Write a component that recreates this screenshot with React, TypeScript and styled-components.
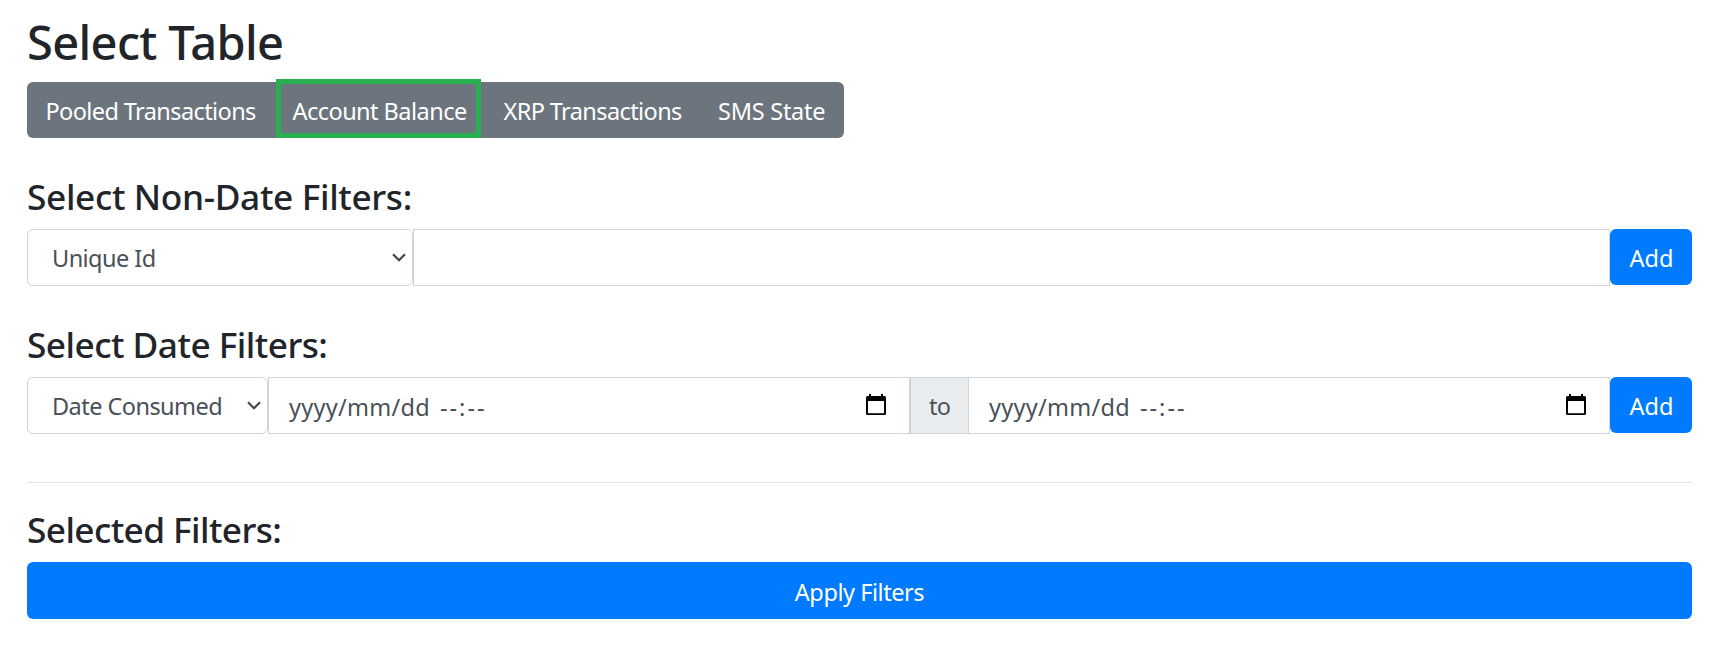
import React from "react";
import styled, { createGlobalStyle } from "styled-components";

const GlobalStyle = createGlobalStyle`
  *, *::before, *::after { box-sizing: border-box; }
  body {
    margin: 0;
    background: #fff;
    color: #212529;
    font-family: "Segoe UI", "Noto Sans", "Open Sans", sans-serif;
    font-size: 23.5px;
    line-height: 36px;
  }
`;

const Page = styled.main`
  padding: 13px 43px 36px 27px;
  white-space: nowrap;
`;

const Title = styled.h1`
  margin: 0 0 11px;
  font-size: 47px;
  font-weight: 500;
  line-height: 58px;
  letter-spacing: -0.65px;
`;

const Heading = styled.h4<{ $spacing: number }>`
  margin: 0 0 11px;
  font-size: 35.25px;
  font-weight: 500;
  line-height: 43px;
  letter-spacing: ${(p) => p.$spacing}px;
`;

const Label = styled.span<{ $spacing?: number }>`
  letter-spacing: ${(p) => p.$spacing ?? 0}px;
`;

const ButtonGroup = styled.div`
  display: inline-flex;
  height: 56px;
  margin-bottom: 37px;
  border-radius: 6px;
  background: #6c757d;
  vertical-align: top;
`;

const TableButton = styled.button<{ $width: number }>`
  position: relative;
  display: flex;
  align-items: center;
  width: ${(p) => p.$width}px;
  padding: 1px 0 0 18.5px;
  border: 0;
  background: transparent;
  color: #fff;
  font: inherit;
`;

const Highlight = styled.span`
  position: absolute;
  top: -3px;
  left: 2px;
  width: 205px;
  height: 59px;
  border: 5px solid #28b050;
`;

const InputRow = styled.div<{ $gap: number }>`
  display: flex;
  align-items: flex-start;
  height: 57px;
  margin-bottom: ${(p) => p.$gap}px;
  color: #495057;
`;

const SelectBox = styled.div<{ $width: number }>`
  display: flex;
  align-items: center;
  justify-content: space-between;
  width: ${(p) => p.$width}px;
  height: 57px;
  padding: 0 6px 0 24px;
  border: 1px solid #ced4da;
  border-radius: 6px;
`;

const Field = styled.div`
  display: flex;
  flex: 1;
  align-items: center;
  height: 57px;
  padding: 3px 23px 0 20px;
  border: 1px solid #ced4da;
`;

const DateText = styled.span`
  display: flex;
  flex: 1;
  gap: 10px;
`;

const Addon = styled.div`
  display: flex;
  align-items: center;
  width: 58px;
  height: 57px;
  padding: 1px 0 0 18px;
  border: 1px solid #ced4da;
  border-right: 0;
  background: #e9ecef;
`;

const PrimaryButton = styled.button<{ $block?: boolean }>`
  display: flex;
  align-items: center;
  justify-content: center;
  width: ${(p) => (p.$block ? "100%" : "82px")};
  height: ${(p) => (p.$block ? 57 : 56)}px;
  padding: ${(p) => (p.$block ? "3px 0 0" : "1px 0 0 1px")};
  border: 0;
  border-radius: 6px;
  background: #007bff;
  color: #fff;
  font: inherit;
`;

const Divider = styled.hr`
  height: 1px;
  margin: 0 0 25px;
  border: 0;
  background: #e3e4e5;
`;

const ChevronSvg = styled.svg`
  display: block;
  margin-top: 0;
`;

const CalendarSvg = styled.svg`
  display: block;
  margin-top: -5px;
`;

const Chevron = () => (
  <ChevronSvg width="14" height="9" viewBox="0 0 14 9" fill="none" stroke="#3f464c" strokeWidth="2.1">
    <path d="M1 1.2 7 7.2 13 1.2" />
  </ChevronSvg>
);

const Calendar = () => (
  <CalendarSvg width="20" height="21" viewBox="0 0 20 21">
    <path
      fill="#000"
      fillRule="evenodd"
      d="M3 0h2v2h10V0h2v2h1.5Q20 2 20 3.5v16q0 1.5-1.5 1.5h-17Q0 21 0 19.500v-16Q0 2 1.500 2H3ZM2 7v12.300h16V7Z"
    />
  </CalendarSvg>
);

const DateField = () => (
  <Field>
    <DateText>
      <Label $spacing={0.27}>yyyy/mm/dd</Label>
      <Label $spacing={2}>--:--</Label>
    </DateText>
    <Calendar />
  </Field>
);

const tables = [
  { name: "Pooled Transactions", width: 247, spacing: -0.6 },
  { name: "Account Balance", width: 211, spacing: -0.54, active: true },
  { name: "XRP Transactions", width: 214.5, spacing: -0.6 },
  { name: "SMS State", width: 144.5, spacing: -0.25 },
];

export default function App() {
  return (
    <>
      <GlobalStyle />
      <Page>
        <Title>Select Table</Title>
        <ButtonGroup>
          {tables.map((t) => (
            <TableButton key={t.name} $width={t.width}>
              <Label $spacing={t.spacing}>{t.name}</Label>
              {t.active && <Highlight />}
            </TableButton>
          ))}
        </ButtonGroup>

        <Heading $spacing={-0.36}>Select Non-Date Filters:</Heading>
        <InputRow $gap={37}>
          <SelectBox $width={386}>
            <Label $spacing={-0.55}>Unique Id</Label>
            <Chevron />
          </SelectBox>
          <Field />
          <PrimaryButton>Add</PrimaryButton>
        </InputRow>

        <Heading $spacing={-0.54}>Select Date Filters:</Heading>
        <InputRow $gap={48}>
          <SelectBox $width={241}>
            <Label $spacing={-0.55}>Date Consumed</Label>
            <Chevron />
          </SelectBox>
          <DateField />
          <Addon>
            <Label $spacing={-0.7}>to</Label>
          </Addon>
          <DateField />
          <PrimaryButton>Add</PrimaryButton>
        </InputRow>

        <Divider />

        <Heading $spacing={-0.6}>Selected Filters:</Heading>
        <PrimaryButton $block>
          <Label $spacing={-0.44}>Apply Filters</Label>
        </PrimaryButton>
      </Page>
    </>
  );
}
